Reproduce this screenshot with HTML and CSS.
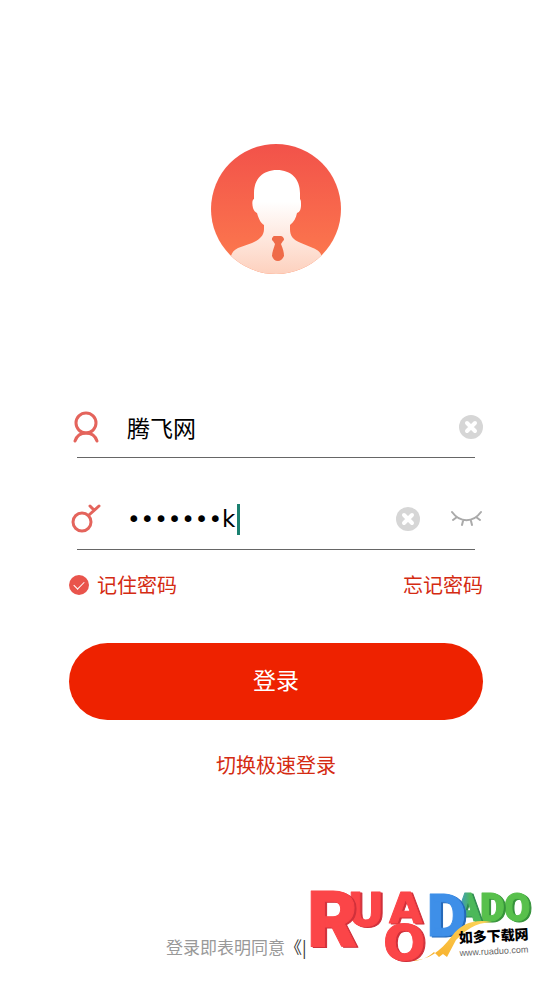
FILE: index.html
```
<!DOCTYPE html>
<html lang="zh-CN">
<head>
    <meta charset="UTF-8">
    <meta name="viewport" content="width=device-width, initial-scale=1.0">
    <title>登录</title>
    <link rel="stylesheet" href="styles.css">
</head>
<body>
    <main class="login">
        <!-- Avatar -->
        <svg class="avatar" viewBox="0 0 132 132" aria-hidden="true">
            <defs>
                <linearGradient id="avatarBg" x1="0" y1="0" x2="0" y2="1">
                    <stop offset="0" stop-color="#f2524a"/>
                    <stop offset="1" stop-color="#fd7c4e"/>
                </linearGradient>
                <linearGradient id="avatarBody" x1="0" y1="0" x2="0" y2="1">
                    <stop offset="0.3" stop-color="#ffffff"/>
                    <stop offset="1" stop-color="#fdd0bd"/>
                </linearGradient>
                <clipPath id="avatarClip"><circle cx="66" cy="66" r="65"/></clipPath>
            </defs>
            <circle cx="66" cy="66" r="65" fill="url(#avatarBg)"/>
            <g clip-path="url(#avatarClip)">
                <path fill="url(#avatarBody)" d="M67 27C53 27 44 36 44 50V56C42 57 42 61 43 65C44 68 45 69 47 70C49 77 51 80 54 82V86C54 93 49 97 42 100L28 105C22 108 21 112 20 117V132H112V117C112 111 110 108 103 105L91 100C83 97 80 93 80 86V82C84 79 86 75 87 70C90 69 91 66 91 62C91 59 91 57 90 56V50C90 36 81 27 67 27Z"/>
                <path fill="#ef6b49" d="M64 93H71C74 94 75 97 73 98L71 101C73 106 74 109 74 113C73 116 70 118 68 118C65 118 63 116 62 113C62 109 64 105 65 101L63 98C61 97 62 94 64 93Z"/>
            </g>
        </svg>

        <form class="form">
            <!-- Account -->
            <div class="field">
                <div class="field-row">
                    <label class="field-icon" for="account" aria-label="账号">
                        <svg width="34" height="34" viewBox="0 0 34 34" fill="none" stroke="#e4645c" stroke-width="3" stroke-linecap="round">
                            <circle cx="17" cy="13" r="10"/>
                            <path d="M6 31C8 25 12 23 17 23S26 25 28 31"/>
                        </svg>
                    </label>
                    <input class="account" id="account" type="text" value="腾飞网">
                    <button class="icon-button" type="button" aria-label="清除账号">
                        <svg width="24" height="24" viewBox="0 0 24 24">
                            <circle cx="12" cy="12" r="12" fill="#d6d6d6"/>
                            <path d="M8 8L16 16M16 8L8 16" stroke="#fff" stroke-width="4" stroke-linecap="round"/>
                        </svg>
                    </button>
                </div>
            </div>

            <!-- Password -->
            <div class="field">
                <div class="field-row">
                    <label class="field-icon" for="password" aria-label="密码">
                        <svg width="34" height="34" viewBox="0 0 34 34" fill="none" stroke="#e4645c" stroke-width="3" stroke-linecap="round">
                            <circle cx="13" cy="20" r="9"/>
                            <path d="M20 13L30 4M21 4L25 8"/>
                        </svg>
                    </label>
                    <div class="password-box">
                        <input class="password" id="password" type="text" value="•••••••k" autocomplete="off">
                        <span class="caret"></span>
                    </div>
                    <button class="icon-button" type="button" aria-label="清除密码">
                        <svg width="24" height="24" viewBox="0 0 24 24">
                            <circle cx="12" cy="12" r="12" fill="#d6d6d6"/>
                            <path d="M8 8L16 16M16 8L8 16" stroke="#fff" stroke-width="4" stroke-linecap="round"/>
                        </svg>
                    </button>
                    <button class="icon-button eye" type="button" aria-label="显示密码">
                        <svg width="32" height="24" viewBox="0 0 32 24" fill="none" stroke="#aaa" stroke-width="2" stroke-linecap="round">
                            <path d="M1 5C9 16 22 16 30 5M6 10L2 13M12 14L11 18M20 14L21 18M25 10L29 13"/>
                        </svg>
                    </button>
                </div>
            </div>

            <div class="options">
                <label class="remember"><input type="checkbox" checked>记住密码</label>
                <a href="#">忘记密码</a>
            </div>

            <button class="submit" type="submit">登录</button>
            <a class="switch" href="#">切换极速登录</a>
        </form>
    </main>

    <footer>
        <p class="agreement">登录即表明同意<a href="#">《|</a></p>
    </footer>

    <!-- Site mark over the bottom corner -->
    <svg class="mark" width="262" height="111" viewBox="0 0 262 111" role="img" aria-label="如多下载网">
        <defs>
            <linearGradient id="blueGreen" x1="0" y1="0" x2="1" y2="0">
                <stop offset="0.1" stop-color="#3e8fe8"/>
                <stop offset="0.6" stop-color="#4cb85a"/>
            </linearGradient>
            <linearGradient id="gold" x1="0" y1="1" x2="1" y2="0">
                <stop offset="0" stop-color="#f6a823"/>
                <stop offset="1" stop-color="#fdd55a"/>
            </linearGradient>
        </defs>
        <rect x="16" y="14" width="246" height="97" fill="#fff"/>
        <g class="mark-letters">
            <text class="green" x="214" y="51" font-size="38">O</text>
            <text class="green" x="190" y="51" font-size="38">D</text>
            <text class="mix" x="165" y="51" font-size="38">A</text>
            <text class="blue" x="137" y="66" font-size="60">D</text>
            <path d="M116 90C136 92 148 84 162 66C172 53 184 49 202 52C184 53 176 60 166 70L157 87L153 84L149 87L144 82C136 89 126 93 116 90Z" fill="url(#gold)"/>
            <text class="red wide" x="57" y="56" font-size="46">U</text>
            <text class="red wide" x="99" y="53" font-size="43">A</text>
            <text class="red wide" x="93" y="90" font-size="50">O</text>
            <text class="red" x="17" y="77" font-size="78">R</text>
        </g>
        <g transform="rotate(-3 169 74)">
            <text class="mark-name" x="169" y="73">如多下载网</text>
            <text class="mark-url" x="169" y="86">www.ruaduo.com</text>
        </g>
    </svg>
</body>
</html>
```
FILE: styles.css
```
* {
    box-sizing: border-box;
}

body {
    margin: 0;
    min-height: 100vh;
    display: flex;
    flex-direction: column;
    position: relative;
    background-color: #fff;
    color: #000;
    font-family: "Noto Sans CJK SC", sans-serif;
    font-size: 20px;
}

a {
    color: #d42b12;
    text-decoration: none;
}

button {
    border: none;
    padding: 0;
    background: none;
    font-family: inherit;
    cursor: pointer;
}

.login {
    flex: 1;
    padding: 143px 69px 0;
    display: flex;
    flex-direction: column;
    align-items: center;
}

.avatar {
    width: 132px;
    height: 132px;
}

.form {
    width: 100%;
    margin-top: 120px;
}

/* Fields */
.field {
    margin-bottom: 29px;
}

.field::after {
    content: '';
    display: block;
    height: 1px;
    margin: 0 8px;
    background-color: #666;
}

.field-row {
    height: 62px;
    padding-top: 2px;
    display: flex;
    align-items: center;
}

.field-icon {
    width: 34px;
    height: 34px;
    margin-right: 24px;
}

.field input {
    border: none;
    outline: none;
    padding: 0;
    background: none;
    color: #000;
    font-size: 23px;
    line-height: 32px;
}

.field .account {
    flex: 1;
    min-width: 0;
    font-family: inherit;
}

.password-box {
    flex: 1;
    min-width: 0;
    display: flex;
    align-items: center;
}

.field .password {
    width: 110px;
    field-sizing: content;
    font-family: "DejaVu Sans", sans-serif;
}

.caret {
    width: 3px;
    height: 31px;
    background-color: #1a8070;
}

.icon-button,
.icon-button svg,
.field-icon svg,
.mark {
    display: block;
}

.eye {
    margin-left: 31px;
}

/* Remember / forgot */
.options {
    display: flex;
    justify-content: space-between;
    align-items: center;
    margin-top: -9px;
    line-height: 30px;
    color: #d42b12;
}

.remember {
    display: flex;
    align-items: center;
    gap: 8px;
}

.remember input {
    appearance: none;
    width: 20px;
    height: 20px;
    margin: 0;
    border-radius: 50%;
    background-color: #e9544c;
    display: grid;
    place-items: center;
}

.remember input:checked::after {
    content: '';
    width: 9px;
    height: 5px;
    margin-bottom: 3px;
    border-left: 1px solid #fff;
    border-bottom: 1px solid #fff;
    transform: rotate(-45deg);
}

.submit {
    display: block;
    width: 100%;
    height: 77px;
    margin-top: 43px;
    padding-bottom: 6px;
    border-radius: 39px;
    background-color: #ee2200;
    color: #fff;
    font-size: 23px;
}

.switch {
    display: block;
    margin-top: 30px;
    line-height: 30px;
    text-align: center;
}

/* Agreement */
.agreement {
    margin: 0;
    padding: 0 166px 22px;
    font-size: 17px;
    line-height: 24px;
    white-space: nowrap;
    color: #999;
}

.agreement a {
    color: #333;
}

/* Site mark */
.mark {
    position: absolute;
    right: 0;
    bottom: 0;
}

.mark-letters text {
    font-family: Roboto, "Liberation Sans", sans-serif;
    font-weight: 900;
    stroke-width: 1px;
    stroke-linejoin: round;
}

.mark-letters .wide {
    font-family: "DejaVu Sans", sans-serif;
    font-weight: bold;
}

.red {
    fill: #fb4548;
    stroke: #fb4548;
    filter: drop-shadow(2px 1px 0 #d0303a);
}

.blue {
    fill: #3e8fe8;
    stroke: #3e8fe8;
    filter: drop-shadow(2px 1px 0 #2468b8);
}

.mix {
    fill: url(#blueGreen);
    stroke: url(#blueGreen);
    filter: drop-shadow(2px 1px 0 #2f8a50);
}

.green {
    fill: #58c04c;
    stroke: #58c04c;
    filter: drop-shadow(2px 1px 0 #35923a);
}

.mark-name {
    font-size: 14px;
    font-weight: 900;
}

.mark-url {
    font-family: "Liberation Sans", sans-serif;
    font-size: 9px;
    fill: #666;
}
```
